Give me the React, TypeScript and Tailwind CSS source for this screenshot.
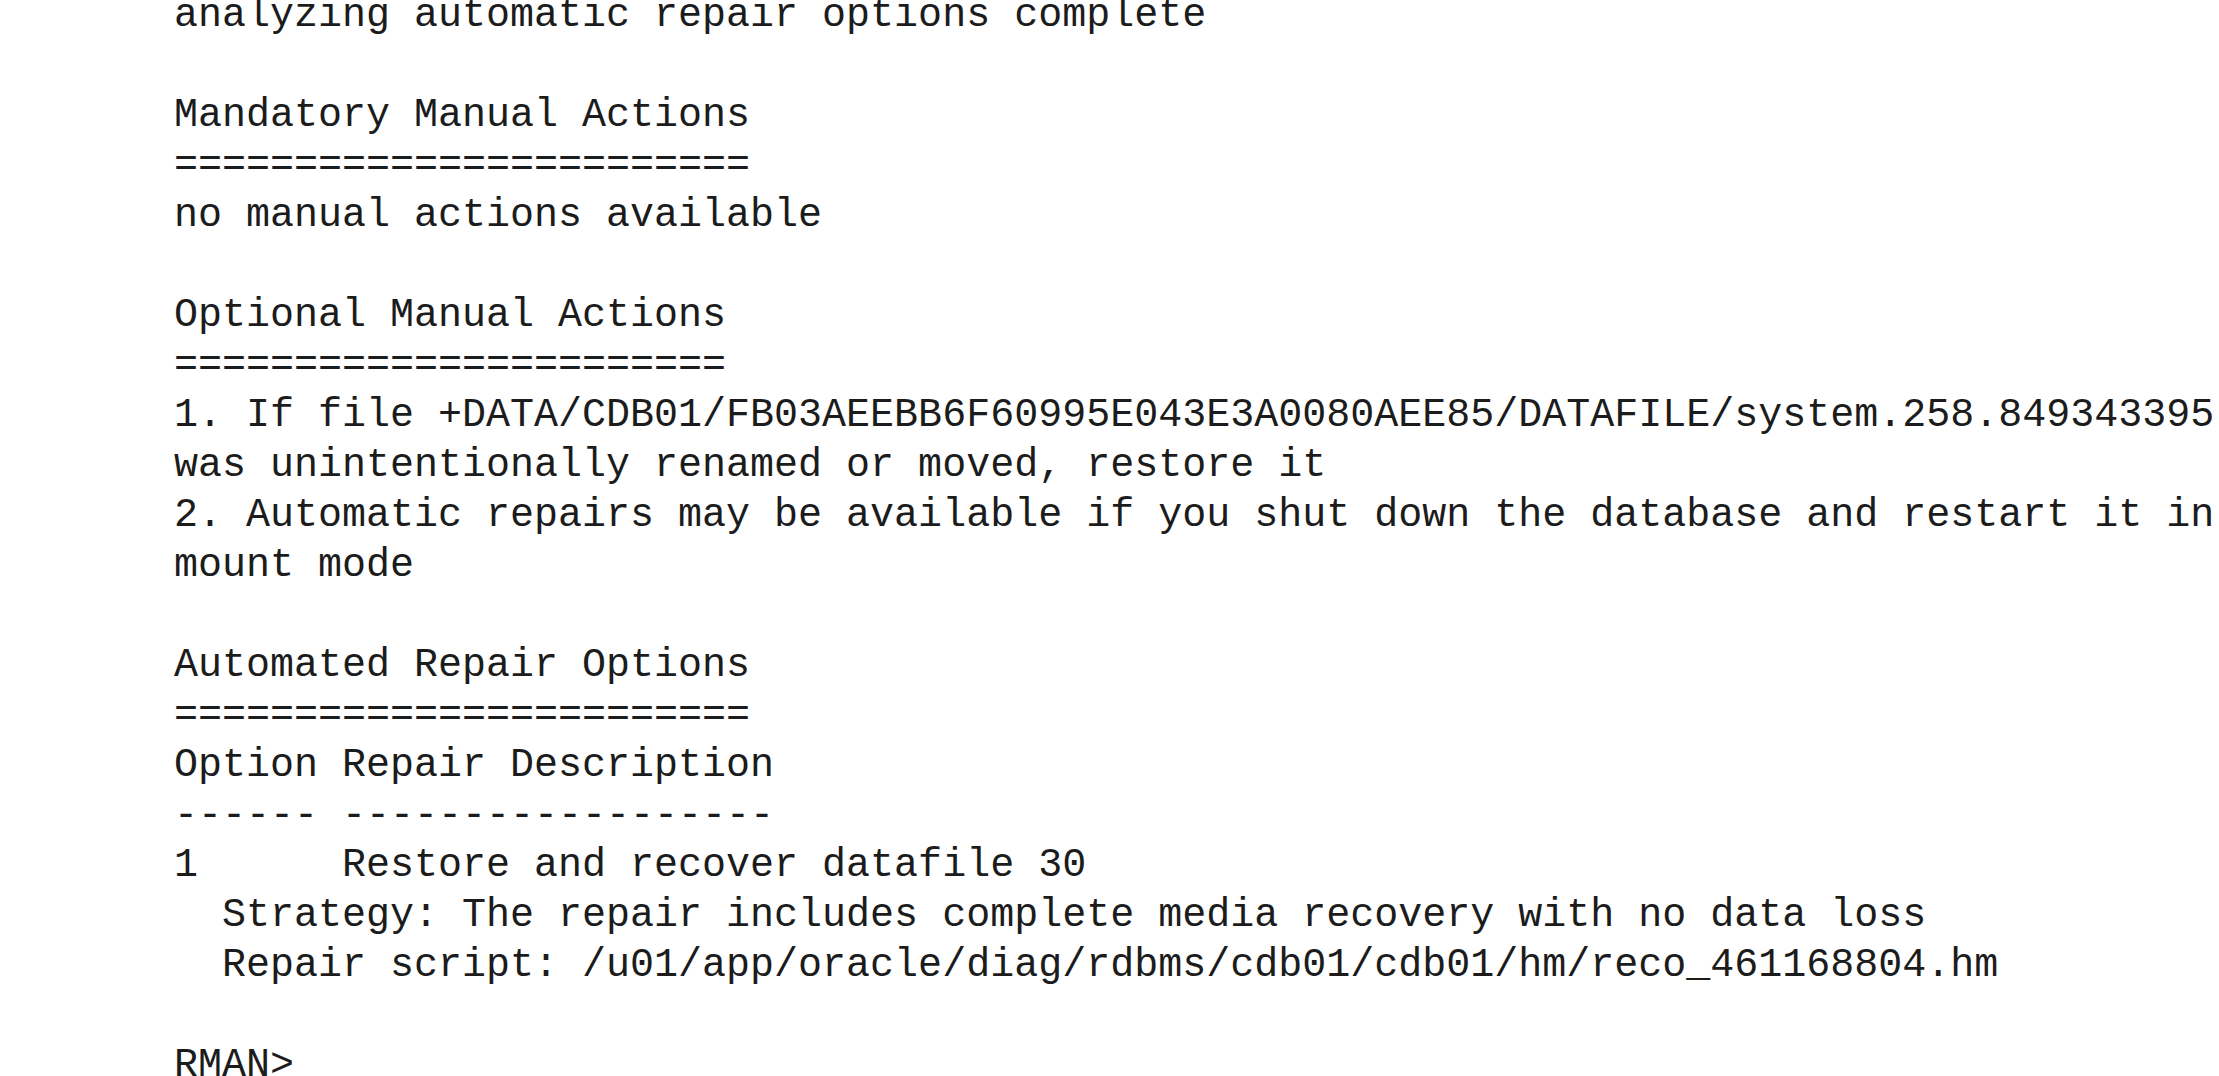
import React from 'react';

const lines: string[] = [
  'analyzing automatic repair options complete',
  '',
  'Mandatory Manual Actions',
  '========================',
  'no manual actions available',
  '',
  'Optional Manual Actions',
  '=======================',
  '1. If file +DATA/CDB01/FB03AEEBB6F60995E043E3A0080AEE85/DATAFILE/system.258.849343395',
  'was unintentionally renamed or moved, restore it',
  '2. Automatic repairs may be available if you shut down the database and restart it in',
  'mount mode',
  '',
  'Automated Repair Options',
  '========================',
  'Option Repair Description',
  '------ ------------------',
  '1      Restore and recover datafile 30',
  '  Strategy: The repair includes complete media recovery with no data loss',
  '  Repair script: /u01/app/oracle/diag/rdbms/cdb01/cdb01/hm/reco_461168804.hm',
  '',
  'RMAN>',
];

const App: React.FC = () => {
  return (
    <div className="h-[1076px] w-[2219px] overflow-hidden bg-white">
      <pre className="mt-[-9px] pl-[174px] font-['Liberation_Mono',monospace] text-[40px] leading-[50px] text-[#1c1c1c] whitespace-pre">
        {lines.map((line, i) => (
          <div key={i} className="h-[50px]">
            {line}
          </div>
        ))}
      </pre>
    </div>
  );
};

export default App;
